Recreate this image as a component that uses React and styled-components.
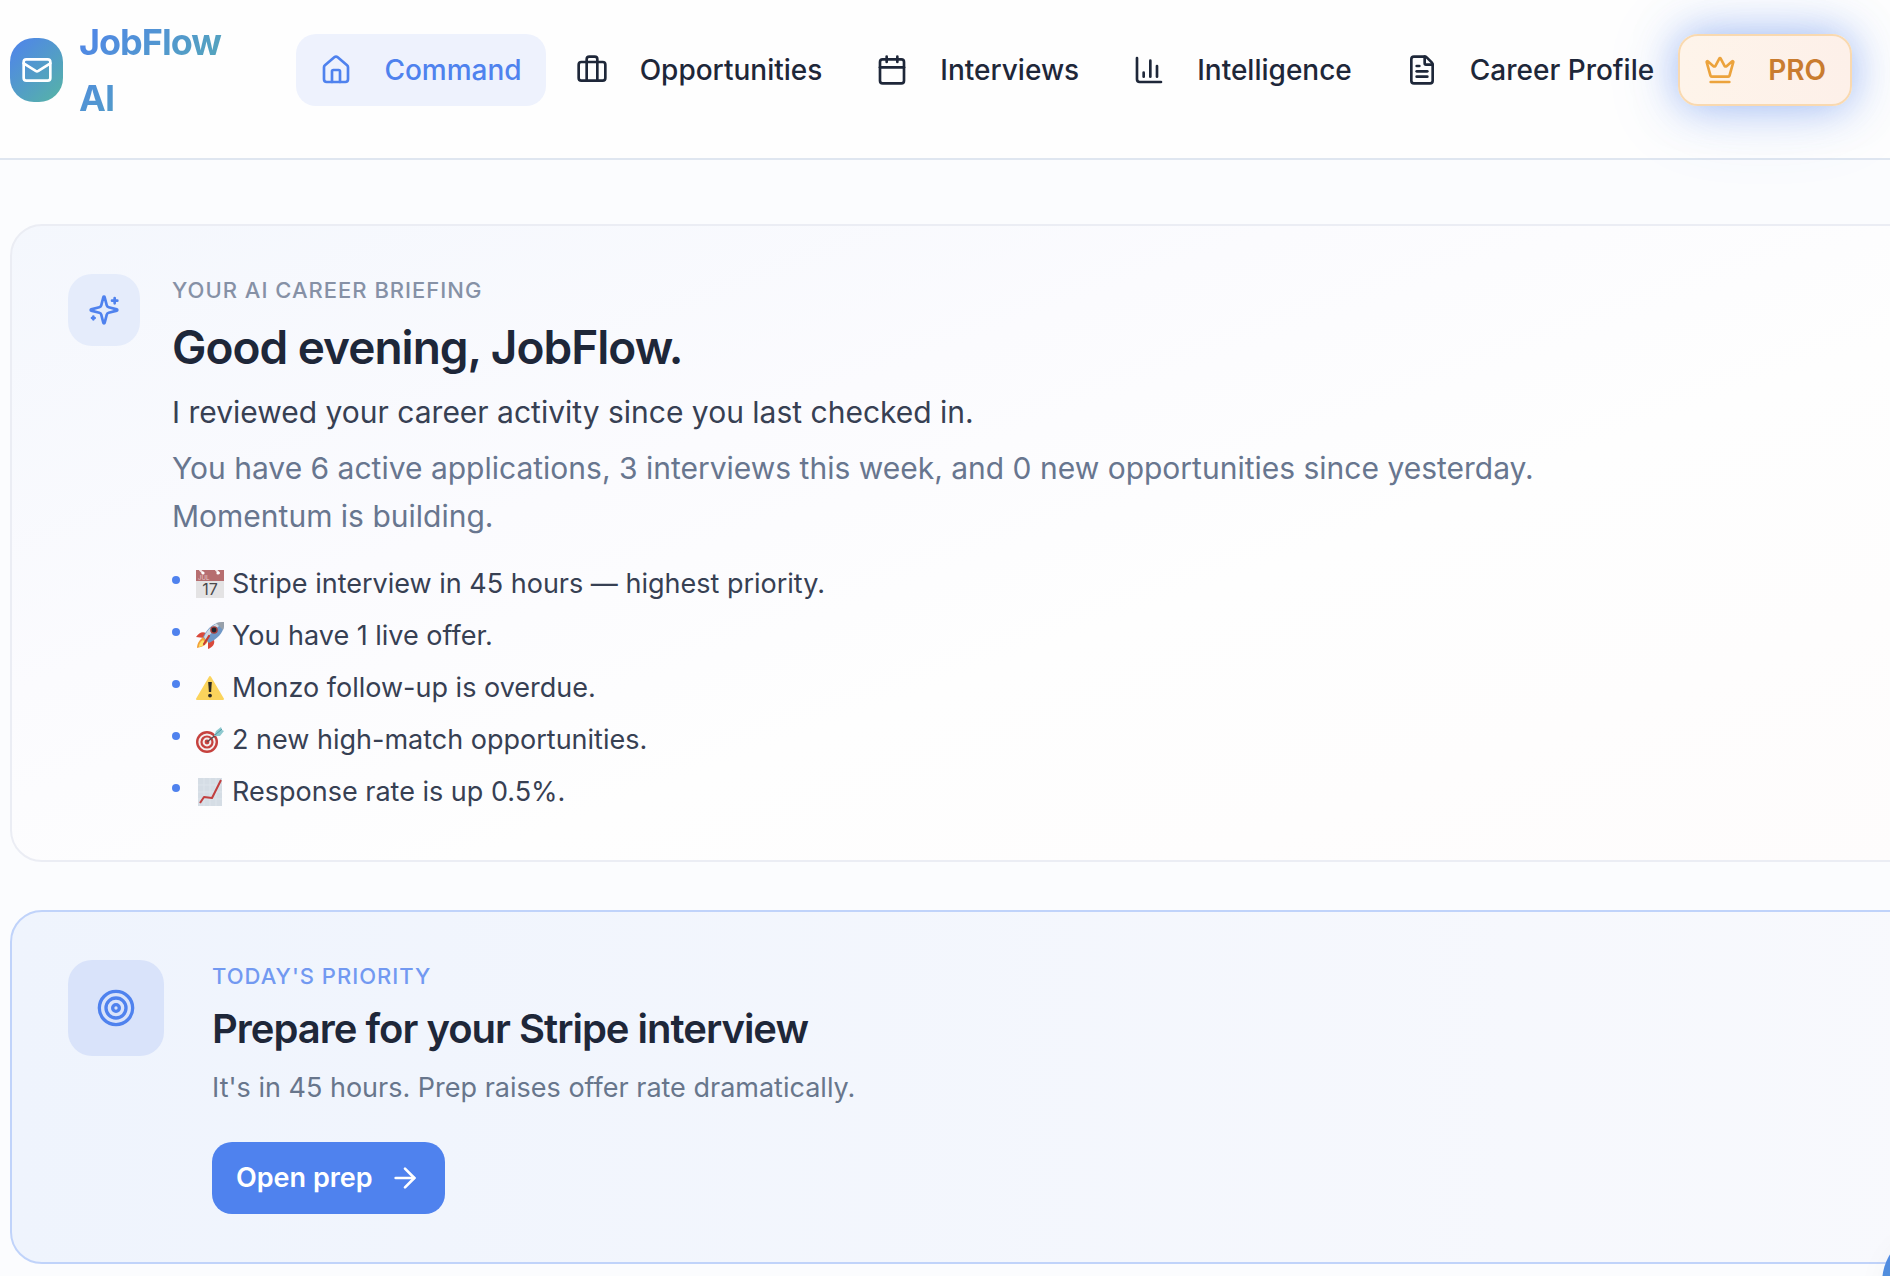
import React, { useState } from 'react';
import styled, { createGlobalStyle } from 'styled-components';
import {
    ArrowRight,
    Briefcase,
    Calendar,
    ChartColumn,
    Crown,
    FileText,
    House,
    Mail,
    MessageCircle,
    Target,
} from 'lucide-react';

const navItems = [
    { label: 'Command', icon: House },
    { label: 'Opportunities', icon: Briefcase },
    { label: 'Interviews', icon: Calendar },
    { label: 'Intelligence', icon: ChartColumn },
    { label: 'Career Profile', icon: FileText },
];

function SparklesIcon() {
    return (
        <svg
            width="32"
            height="32"
            viewBox="0 0 24 24"
            fill="none"
            stroke="currentColor"
            strokeWidth="2"
            strokeLinecap="round"
            strokeLinejoin="round"
            aria-hidden="true"
        >
            <path d="M9.937 15.5A2 2 0 0 0 8.5 14.063l-6.135-1.582a.5.5 0 0 1 0-.962L8.5 9.936A2 2 0 0 0 9.937 8.5l1.582-6.135a.5.5 0 0 1 .963 0L14.063 8.5A2 2 0 0 0 15.5 9.937l6.135 1.581a.5.5 0 0 1 0 .964L15.5 14.063a2 2 0 0 0-1.437 1.437l-1.582 6.135a.5.5 0 0 1-.963 0z" />
            <path d="M20 3v4M22 5h-4M4 17v2M5 18H3" />
        </svg>
    );
}

function CalendarEmoji() {
    return (
        <Emoji viewBox="0 0 28 28" aria-hidden="true">
            <rect width="28" height="28" fill="#e4e3e4" />
            <rect width="28" height="11" fill="#b66e70" />
            <path d="M4 0l3 3M20 0l3 3" stroke="#f3e4e4" strokeWidth="2" strokeLinecap="round" />
            <circle cx="7" cy="3" r="1.6" fill="#fff" />
            <circle cx="22" cy="3" r="1.6" fill="#fff" />
            <text x="2" y="10" fontSize="6" fill="#e8cccc">JUL</text>
            <text x="14" y="25" fontSize="16" textAnchor="middle" fill="#4a4a4c">17</text>
        </Emoji>
    );
}

function RocketEmoji() {
    return (
        <Emoji viewBox="0 0 28 28" aria-hidden="true">
            <path d="M10 11C6 9 3 11 0 15l8 1zM18 18c1 4-1 7-6 9l0-8z" fill="#d9493b" />
            <path d="M8 15c-4 2-7 6-7 11 5-1 9-3 11-7z" fill="#f3a23a" />
            <path d="M7 18c-3 2-4 4-4 7 3-1 5-2 7-4z" fill="#fbe36a" />
            <path d="M28 0C19 0 12 5 7 15l6 6C23 16 29 9 28 0z" fill="#6f97c6" />
            <path d="M28 0C20 0 12 6 8 15l2 3C15 10 22 5 28 0z" fill="#cfd9e3" />
            <path d="M28 0c-3 0-5 0-8 1l7 7c1-3 1-5 1-8z" fill="#98a0aa" />
            <circle cx="18" cy="8" r="3.8" fill="#a8403c" />
            <circle cx="18" cy="8" r="2.4" fill="#1e2530" />
            <path d="M13 14L8 22" stroke="#c63c33" strokeWidth="2.2" strokeLinecap="round" />
        </Emoji>
    );
}

function WarningEmoji() {
    return (
        <Emoji viewBox="0 0 28 28" aria-hidden="true">
            <path d="M14 3L27 25H1z" fill="#fbd45c" stroke="#fbd45c" strokeWidth="2" strokeLinejoin="round" />
            <path d="M12.2 8h3.6l-.7 10h-2.2z" fill="#2d2a22" />
            <circle cx="14" cy="21.6" r="1.9" fill="#2d2a22" />
        </Emoji>
    );
}

function DartEmoji() {
    return (
        <Emoji viewBox="0 0 28 28" aria-hidden="true">
            <circle cx="11" cy="16" r="11" fill="#c6413e" />
            <circle cx="11" cy="16" r="8.6" fill="#f4eeee" />
            <circle cx="11" cy="16" r="6.6" fill="#c6413e" />
            <circle cx="11" cy="16" r="4.4" fill="#f4eeee" />
            <circle cx="11" cy="16" r="2.4" fill="#c6413e" />
            <path d="M11 16L21 8" stroke="#5f4a4f" strokeWidth="1.6" />
            <path d="M18 10l2-5 5-4 1 3 2 1-4 5z" fill="#8ec9cf" />
            <path d="M19 9l7-6" stroke="#4f9aa5" strokeWidth="1" />
        </Emoji>
    );
}

function ChartEmoji() {
    return (
        <Emoji viewBox="0 0 28 28" aria-hidden="true">
            <rect x="2" width="24" height="28" fill="#d5dde5" />
            <path d="M8 0v28M14 0v28M20 0v28M2 7h24M2 14h24M2 21h24" stroke="#dde4eb" strokeWidth="1" />
            <path d="M4 25l4-6 8 1 9-18" fill="none" stroke="#c13f3f" strokeWidth="2" strokeLinejoin="round" />
        </Emoji>
    );
}

const briefing = [
    { icon: CalendarEmoji, text: 'Stripe interview in 45 hours — highest priority.' },
    { icon: RocketEmoji, text: 'You have 1 live offer.' },
    { icon: WarningEmoji, text: 'Monzo follow-up is overdue.' },
    { icon: DartEmoji, text: '2 new high-match opportunities.' },
    { icon: ChartEmoji, text: 'Response rate is up 0.5%.' },
];

function App() {
    const [active, setActive] = useState('Command');

    return (
        <>
            <GlobalStyle />
            <Page>
                <Header>
                    <Brand href="#">
                        <BrandMark>
                            <Mail size={32} />
                        </BrandMark>
                        <BrandName>JobFlow AI</BrandName>
                    </Brand>
                    <Nav>
                        {navItems.map(({ label, icon: Icon }) => (
                            <NavButton key={label} $active={active === label} onClick={() => setActive(label)}>
                                <Icon size={32} />
                                {label}
                            </NavButton>
                        ))}
                    </Nav>
                    <ProButton>
                        <Crown size={32} />
                        PRO
                    </ProButton>
                </Header>

                <Main>
                    <BriefingCard>
                        <SmallTile>
                            <SparklesIcon />
                        </SmallTile>
                        <CardBody>
                            <Eyebrow>Your AI career briefing</Eyebrow>
                            <Greeting>Good evening, JobFlow.</Greeting>
                            <Lead>I reviewed your career activity since you last checked in.</Lead>
                            <Summary>
                                You have 6 active applications, 3 interviews this week, and 0 new opportunities since
                                yesterday. Momentum is building.
                            </Summary>
                            <BriefingList>
                                {briefing.map(({ icon: Icon, text }) => (
                                    <BriefingItem key={text}>
                                        <Dot />
                                        <ItemText>
                                            <Icon />
                                            {text}
                                        </ItemText>
                                    </BriefingItem>
                                ))}
                            </BriefingList>
                        </CardBody>
                    </BriefingCard>

                    <PriorityCard>
                        <LargeTile>
                            <Target size={40} />
                        </LargeTile>
                        <CardBody>
                            <Eyebrow $accent>Today's priority</Eyebrow>
                            <PriorityTitle>Prepare for your Stripe interview</PriorityTitle>
                            <PriorityText>It's in 45 hours. Prep raises offer rate dramatically.</PriorityText>
                            <PrepButton>
                                Open prep
                                <ArrowRight size={32} />
                            </PrepButton>
                        </CardBody>
                    </PriorityCard>
                </Main>

                <ChatButton aria-label="Open assistant">
                    <MessageCircle size={48} />
                </ChatButton>
            </Page>
        </>
    );
}

export default App;

const GlobalStyle = createGlobalStyle`
  * {
    box-sizing: border-box;
  }

  body {
    margin: 0;
    background: #fbfcfe;
    color: #1e2739;
    font-family: Inter, "Liberation Sans", sans-serif;
    font-size: 28px;
    line-height: 40px;
  }

  h1, h2, p, ul {
    margin: 0;
    padding: 0;
  }

  button {
    border: 0;
    font: inherit;
    cursor: pointer;
  }

  svg {
    flex-shrink: 0;
  }
`

const Page = styled.div`
   position: relative;
   min-height: 100vh;
   overflow: hidden;
`

const Header = styled.header`
   display: flex;
   align-items: flex-start;
   padding: 14px 38px 24px 10px;
   background: #fefefe;
   border-bottom: 2px solid #dfe6f0;
`

const Brand = styled.a`
   display: flex;
   align-items: center;
   gap: 16px;
   flex: 1;
   min-width: 0;
   padding-right: 64px;
   text-decoration: none;
`

const BrandMark = styled.span`
   display: flex;
   align-items: center;
   justify-content: center;
   width: 53px;
   height: 64px;
   margin-top: -8px;
   flex-shrink: 0;
   border-radius: 24px;
   background: linear-gradient(135deg, #4f82ee, #56b5a4);
   color: #fff;
`

const BrandName = styled.span`
   padding-bottom: 8px;
   font-size: 36px;
   font-weight: 700;
   line-height: 56px;
   letter-spacing: -1px;
   background: linear-gradient(135deg, #4f82ee, #56b5a4);
   background-clip: text;
   color: transparent;
`

const Nav = styled.nav`
   display: flex;
   gap: 6px;
   padding-top: 20px;
`

const NavButton = styled.button`
   display: flex;
   align-items: center;
   gap: 32px;
   height: 72px;
   padding: 0 24px;
   border-radius: 20px;
   background: ${({ $active }) => ($active ? '#eef2fd' : 'transparent')};
   color: ${({ $active }) => ($active ? '#4f82ee' : '#1e2739')};
   font-weight: 500;
   white-space: nowrap;
`

const ProButton = styled(NavButton)`
   margin-top: 20px;
   border: 2px solid #f9d9b0;
   background: linear-gradient(90deg, #fef4ea, #fdf0e9);
   box-shadow: 0 0 40px rgba(79, 130, 238, 0.5), 0 4px 80px rgba(79, 130, 238, 0.16);
   color: #c97c2f;
   font-weight: 600;

   svg {
    color: #eca33c;
   }
`

const Main = styled.main`
   display: flex;
   flex-direction: column;
   gap: 48px;
   padding: 64px 0 12px 10px;
`

/* cards run on past the right edge of the window */
const Card = styled.section`
   display: flex;
   align-items: flex-start;
   margin-right: -48px;
   padding: 48px 56px;
   border-radius: 32px;
`

const BriefingCard = styled(Card)`
   gap: 32px;
   border: 2px solid #ebedf4;
   background: linear-gradient(160deg, #f4f7fd 0%, #fbfbfe 35%, #fefefe 60%, #fefcfc 100%);
`

const PriorityCard = styled(Card)`
   gap: 48px;
   border: 2px solid #c0d3fa;
   background: linear-gradient(90deg, #eff4fd, #f8f9fd);
`

const Tile = styled.div`
   display: flex;
   align-items: center;
   justify-content: center;
   flex-shrink: 0;
   border-radius: 24px;
   color: #4f82ee;
`

const SmallTile = styled(Tile)`
   width: 72px;
   height: 72px;
   background: #e5ecfb;
`

const LargeTile = styled(Tile)`
   width: 96px;
   height: 96px;
   background: #d9e3fa;
`

const CardBody = styled.div`
   flex: 1;
   min-width: 0;
`

const Eyebrow = styled.p`
   font-size: 22px;
   font-weight: 500;
   line-height: 32px;
   letter-spacing: 1px;
   text-transform: uppercase;
   color: ${({ $accent }) => ($accent ? '#7299f1' : '#8691a6')};
`

const Greeting = styled.h1`
   margin-top: 12px;
   font-size: 46px;
   font-weight: 600;
   line-height: 58px;
   letter-spacing: -1px;
`

const Lead = styled.p`
   margin-top: 12px;
   font-size: 30px;
   line-height: 48px;
   color: #374053;
`

const Summary = styled.p`
   max-width: 1480px;
   margin-top: 8px;
   font-size: 30px;
   line-height: 48px;
   color: #68768f;
`

const BriefingList = styled.ul`
   display: flex;
   flex-direction: column;
   gap: 12px;
   margin-top: 24px;
   list-style: none;
`

const BriefingItem = styled.li`
   display: flex;
   gap: 16px;
   font-size: 27px;
   color: #374053;
`

const Dot = styled.span`
   width: 8px;
   height: 8px;
   margin-top: 12px;
   flex-shrink: 0;
   border-radius: 50%;
   background: #4f82ee;
`

const ItemText = styled.span`
   display: flex;
   align-items: center;
   gap: 8px;
`

const Emoji = styled.svg`
   width: 28px;
   height: 28px;
`

const PriorityTitle = styled.h2`
   margin-top: 12px;
   font-size: 40px;
   font-weight: 600;
   line-height: 50px;
   letter-spacing: -1px;
`

const PriorityText = styled.p`
   margin-top: 12px;
   font-size: 27px;
   line-height: 44px;
   color: #68768c;
`

const PrepButton = styled.button`
   display: flex;
   align-items: center;
   gap: 16px;
   height: 72px;
   margin-top: 32px;
   padding: 0 24px;
   border-radius: 20px;
   background: #4f82ee;
   color: #fff;
   font-size: 27px;
   font-weight: 600;
`

const ChatButton = styled.button`
   position: fixed;
   right: -104px;
   bottom: -63px;
   display: flex;
   align-items: center;
   justify-content: center;
   width: 112px;
   height: 112px;
   border-radius: 50%;
   background: linear-gradient(135deg, #4f82ee, #56b5a4);
   box-shadow: 0 8px 32px rgba(30, 39, 57, 0.04);
   color: #fff;
`
